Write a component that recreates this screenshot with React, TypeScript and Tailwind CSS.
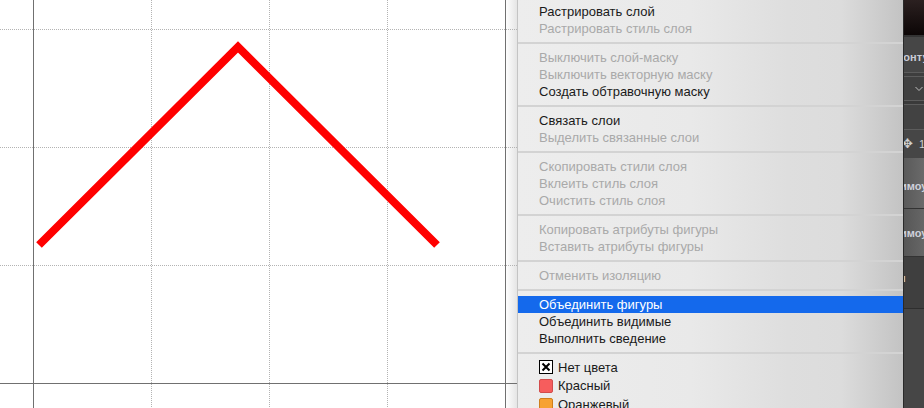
import React from 'react'

type Item =
  | { kind: 'item'; label: string; disabled?: boolean; active?: boolean }
  | { kind: 'sep' }

const items: Item[] = [
  { kind: 'item', label: 'Растрировать слой' },
  { kind: 'item', label: 'Растрировать стиль слоя', disabled: true },
  { kind: 'sep' },
  { kind: 'item', label: 'Выключить слой-маску', disabled: true },
  { kind: 'item', label: 'Выключить векторную маску', disabled: true },
  { kind: 'item', label: 'Создать обтравочную маску' },
  { kind: 'sep' },
  { kind: 'item', label: 'Связать слои' },
  { kind: 'item', label: 'Выделить связанные слои', disabled: true },
  { kind: 'sep' },
  { kind: 'item', label: 'Скопировать стили слоя', disabled: true },
  { kind: 'item', label: 'Вклеить стиль слоя', disabled: true },
  { kind: 'item', label: 'Очистить стиль слоя', disabled: true },
  { kind: 'sep' },
  { kind: 'item', label: 'Копировать атрибуты фигуры', disabled: true },
  { kind: 'item', label: 'Вставить атрибуты фигуры', disabled: true },
  { kind: 'sep' },
  { kind: 'item', label: 'Отменить изоляцию', disabled: true },
  { kind: 'sep' },
  { kind: 'item', label: 'Объединить фигуры', active: true },
  { kind: 'item', label: 'Объединить видимые' },
  { kind: 'item', label: 'Выполнить сведение' },
  { kind: 'sep' },
]

function Canvas() {
  const dotted = { stroke: '#b3b3b3', strokeWidth: 1, strokeDasharray: '1 1' }
  return (
    <div className="relative w-[517px] h-full bg-white shrink-0">
      <svg width="517" height="408" className="block">
        <defs>
          <linearGradient id="edge" x1="0" x2="1" y1="0" y2="0">
            <stop offset="0" stopColor="#ffffff" />
            <stop offset="1" stopColor="#e4e4e4" />
          </linearGradient>
        </defs>
        <rect x="505.5" y="0" width="12" height="408" fill="url(#edge)" />
        {[151.5, 269.5, 387.5].map((x) => (
          <line key={x} x1={x} y1={0} x2={x} y2={408} {...dotted} />
        ))}
        {[29.5, 147.5, 265.5].map((y) => (
          <line key={y} x1={0} y1={y} x2={517} y2={y} {...dotted} />
        ))}
        <line x1="33.5" y1="0" x2="33.5" y2="408" stroke="#707070" strokeWidth="1" />
        <line x1="505.5" y1="0" x2="505.5" y2="408" stroke="#707070" strokeWidth="1" />
        <line x1="0" y1="383.5" x2="517" y2="383.5" stroke="#707070" strokeWidth="1" />
        <polyline
          points="39,245 238,47 437,245"
          fill="none"
          stroke="#ff0000"
          strokeWidth="8"
          strokeLinejoin="miter"
        />
      </svg>
    </div>
  )
}

function Menu() {
  return (
    <div className="w-[386px] h-full shrink-0 border-l border-[#c4c4c4] bg-[linear-gradient(to_right,#ededed_0%,#e9e9e9_45%,#dedede_70%,#dcdcdc_84%,#c3c3c3_100%)] pt-[3px] text-[13px] leading-[17px] font-['Liberation_Sans',Arial,sans-serif]">
      {items.map((it, i) =>
        it.kind === 'sep' ? (
          <div key={i} className="h-[12px] flex items-center">
            <div className="w-full h-[2px] bg-[#d3d3d3]" />
          </div>
        ) : (
          <div
            key={i}
            className={
              it.active
                ? 'h-[17px] pl-[21px] bg-[#1469ec] text-white'
                : it.disabled
                ? 'h-[17px] pl-[21px] text-[#a9a9a9]'
                : 'h-[17px] pl-[21px] text-[#1a1a1a]'
            }
          >
            {it.label}
          </div>
        )
      )}
      <div className="h-[18px] pl-[21px] flex items-center gap-[5px] text-[#1a1a1a] mt-[-1px]">
        <span className="w-[14px] h-[14px] border border-black bg-white flex items-center justify-center">
          <svg width="10" height="10" viewBox="0 0 10 10">
            <path d="M1.5 1.5 L8.5 8.5 M8.5 1.5 L1.5 8.5" stroke="#000" strokeWidth="2" />
          </svg>
        </span>
        <span>Нет цвета</span>
      </div>
      <div className="h-[19px] pl-[21px] flex items-center gap-[5px] text-[#1a1a1a]">
        <span className="w-[14px] h-[14px] rounded-[2px] border border-[#d24c4c] bg-[#f65d5d]" />
        <span>Красный</span>
      </div>
      <div className="h-[19px] pl-[21px] flex items-center gap-[5px] text-[#1a1a1a]">
        <span className="w-[14px] h-[14px] rounded-[2px] border border-[#cf7f1c] bg-[#f7a232]" />
        <span>Оранжевый</span>
      </div>
    </div>
  )
}

function SidePanel() {
  return (
    <div className="flex-1 h-full border-l border-[#2a2a2a] bg-[#454545] overflow-hidden flex flex-col text-[11px] font-['Liberation_Sans',Arial,sans-serif] font-bold whitespace-nowrap">
      <div className="h-[35px] bg-[linear-gradient(to_bottom,#2b2020,#0c0606)]" />
      <div className="h-[2px] bg-[#333]" />
      <div className="h-[35px] bg-[#464646] flex items-center pl-0 text-[#c9cbd6]">
        <span className="ml-[-6px] mt-[5px]">контуры</span>
      </div>
      <div className="h-px bg-[#5c5c5c]" />
      <div className="h-[3px] bg-[#3e3e3e]" />
      <div className="h-px bg-[#5c5c5c]" />
      <div className="h-[23px] bg-[#404040] flex items-center justify-end pr-[1px] text-[#bdbdbd]">
        <svg width="8" height="6" viewBox="0 0 8 6">
          <path d="M0.5 1 L4 4.5 L7.5 1" stroke="#bdbdbd" strokeWidth="1" fill="none" />
        </svg>
      </div>
      <div className="h-px bg-[#5c5c5c]" />
      <div className="h-[3px] bg-[#3a3a3a]" />
      <div className="h-px bg-[#5c5c5c]" />
      <div className="h-[24px] bg-[#424242]" />
      <div className="h-px bg-[#5c5c5c]" />
      <div className="h-[28px] bg-[#464646] flex items-center gap-[6px] text-[#d0d0d0]">
        <span className="ml-[-2px] text-[13px] font-normal">✥</span>
        <span className="font-normal">1</span>
      </div>
      <div className="h-[50px] bg-[linear-gradient(to_right,#5a5a5a,#6a6a6a)] flex items-center text-[#cfd2dc]">
        <span className="ml-[-4px] mt-[6px]">имоу</span>
      </div>
      <div className="h-px bg-[#333]" />
      <div className="h-[47px] bg-[linear-gradient(to_right,#575757,#666)] flex items-center text-[#cfd2dc]">
        <span className="ml-[-4px] mt-[2px]">имоу</span>
      </div>
      <div className="h-px bg-[#333]" />
      <div className="h-[51px] bg-[#3f3f3f] flex items-center text-[#cfd2dc]">
        <span className="ml-[-5px] mt-[-8px]">н</span>
      </div>
      <div className="h-px bg-[#2e2e2e]" />
      <div className="flex-1 bg-[#464646]" />
    </div>
  )
}

export default function App() {
  return (
    <div className="w-[924px] h-[408px] flex overflow-hidden bg-white">
      <Canvas />
      <Menu />
      <SidePanel />
    </div>
  )
}
